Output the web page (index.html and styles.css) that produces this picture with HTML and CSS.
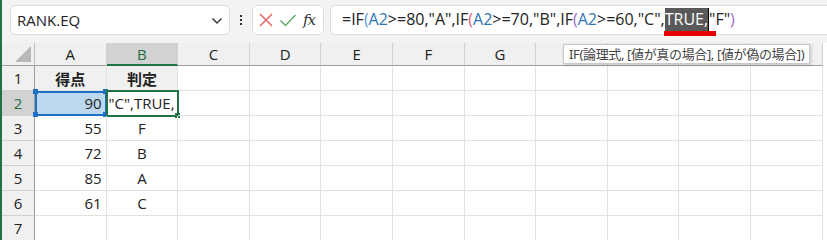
FILE: index.html
```html
<!DOCTYPE html>
<html lang="ja">
<head>
    <meta charset="UTF-8">
    <title>RANK.EQ</title>
    <link rel="stylesheet" href="styles.css">
</head>
<body>
    <div class="app">
        <div class="topbar">
            <div class="namebox">
                <span>RANK.EQ</span>
                <svg class="chevron" width="12" height="8" viewBox="0 0 12 8"><path d="M1.5 1.5 L6 6 L10.5 1.5" fill="none" stroke="#333" stroke-width="1.4"/></svg>
            </div>
            <div class="dots"><i></i><i></i><i></i></div>
            <div class="fbtns">
                <svg width="16" height="16" viewBox="0 0 16 16"><path d="M2 2 L14 14 M14 2 L2 14" stroke="#e06666" stroke-width="1.5" fill="none"/></svg>
                <svg width="18" height="16" viewBox="0 0 18 16"><path d="M1.5 8.5 L6.5 13.5 L16.5 3" stroke="#5cac6a" stroke-width="1.5" fill="none"/></svg>
                <span class="fx">fx</span>
            </div>
            <div class="formula">=IF<span class="p1">(</span><span class="ref">A2</span>&gt;=80,"A",IF<span class="p2">(</span><span class="ref">A2</span>&gt;=70,"B",IF<span class="p3">(</span><span class="ref">A2</span>&gt;=60,"C",<span class="sel">TRUE,</span>"F"<span class="p3">)</span></div>
        </div>

        <div class="sheet">
            <div class="corner"></div>
            <div class="colhead">A</div>
            <div class="colhead active">B</div>
            <div class="colhead">C</div>
            <div class="colhead">D</div>
            <div class="colhead">E</div>
            <div class="colhead">F</div>
            <div class="colhead">G</div>
            <!-- H..K sit under the tooltip -->
            <div class="colhead"></div>
            <div class="colhead"></div>
            <div class="colhead"></div>
            <div class="colhead"></div>

            <div class="rowhead">1</div>
            <div class="cell title">得点</div>
            <div class="cell title">判定</div>
            <div class="cell"></div><div class="cell"></div><div class="cell"></div><div class="cell"></div><div class="cell"></div><div class="cell"></div><div class="cell"></div><div class="cell"></div><div class="cell"></div>

            <div class="rowhead active">2</div>
            <div class="cell num picked">90<b class="h tl"></b><b class="h tr"></b><b class="h bl"></b><b class="h br"></b></div>
            <div class="cell editing">"C",TRUE,<b class="h g"></b></div>
            <div class="cell"></div><div class="cell"></div><div class="cell"></div><div class="cell"></div><div class="cell"></div><div class="cell"></div><div class="cell"></div><div class="cell"></div><div class="cell"></div>

            <div class="rowhead">3</div>
            <div class="cell num">55</div>
            <div class="cell mid">F</div>
            <div class="cell"></div><div class="cell"></div><div class="cell"></div><div class="cell"></div><div class="cell"></div><div class="cell"></div><div class="cell"></div><div class="cell"></div><div class="cell"></div>

            <div class="rowhead">4</div>
            <div class="cell num">72</div>
            <div class="cell mid">B</div>
            <div class="cell"></div><div class="cell"></div><div class="cell"></div><div class="cell"></div><div class="cell"></div><div class="cell"></div><div class="cell"></div><div class="cell"></div><div class="cell"></div>

            <div class="rowhead">5</div>
            <div class="cell num">85</div>
            <div class="cell mid">A</div>
            <div class="cell"></div><div class="cell"></div><div class="cell"></div><div class="cell"></div><div class="cell"></div><div class="cell"></div><div class="cell"></div><div class="cell"></div><div class="cell"></div>

            <div class="rowhead">6</div>
            <div class="cell num">61</div>
            <div class="cell mid">C</div>
            <div class="cell"></div><div class="cell"></div><div class="cell"></div><div class="cell"></div><div class="cell"></div><div class="cell"></div><div class="cell"></div><div class="cell"></div><div class="cell"></div>

            <div class="rowhead">7</div>
            <div class="cell"></div><div class="cell"></div><div class="cell"></div><div class="cell"></div><div class="cell"></div><div class="cell"></div><div class="cell"></div><div class="cell"></div><div class="cell"></div><div class="cell"></div><div class="cell"></div>

            <div class="tooltip">IF(論理式, [値が真の場合], [値が偽の場合])</div>
        </div>
    </div>
</body>
</html>
```

FILE: styles.css
```css
body {
    margin: 0;
    background-color: #ffffff;
    font-family: "Open Sans", "Noto Sans", "Noto Sans CJK JP", sans-serif;
    color: #222;
    overflow: hidden;
}

.app {
    width: 827px;
    height: 240px;
    border-left: 2px solid #217346;
    box-sizing: border-box;
    overflow: hidden;
}

/* formula bar */
.topbar {
    height: 43px;
    background-color: #f3f3f3;
    display: flex;
    align-items: flex-start;
    padding: 5px 0 0 8px;
    box-sizing: border-box;
}

.namebox {
    width: 220px;
    height: 30px;
    box-sizing: border-box;
    background-color: white;
    border: 1px solid #dcdcdc;
    border-radius: 5px;
    display: flex;
    align-items: center;
    justify-content: space-between;
    padding: 0 6px 0 6px;
    font-size: 15px;
    color: #222;
}

.chevron {
    margin-top: 2px;
}

.dots {
    width: 22px;
    height: 30px;
    display: flex;
    flex-direction: column;
    align-items: center;
    justify-content: center;
    gap: 2px;
}

.dots i {
    width: 2px;
    height: 2px;
    background-color: #333;
}

.fbtns {
    width: 72px;
    height: 30px;
    box-sizing: border-box;
    background-color: white;
    border: 1px solid #dcdcdc;
    border-radius: 5px;
    display: flex;
    align-items: center;
    padding: 0 0 0 5px;
    gap: 5px;
}

.fx {
    font-family: "DejaVu Serif", "Liberation Serif", serif;
    font-style: italic;
    font-size: 15px;
    color: #333;
    letter-spacing: -1px;
    margin-left: 1px;
}

.formula {
    flex: 1;
    margin-left: 6px;
    height: 30px;
    box-sizing: border-box;
    background-color: white;
    border: 1px solid #dcdcdc;
    border-right: none;
    border-radius: 5px 0 0 5px;
    padding: 2px 0 0 11px;
    font-size: 16px;
    line-height: 23px;
    white-space: nowrap;
    color: #222;
}

.ref {
    color: #2e75b6;
}

.p1 {
    color: #5b9bd5;
}

.p2 {
    color: #e0607e;
}

.p3 {
    color: #9a6bc4;
}

.sel {
    position: relative;
    background-color: #595959;
    color: white;
    display: inline-block;
    border-right: 1px solid #000;
}

.sel::after {
    content: "";
    position: absolute;
    left: -1px;
    right: -8px;
    top: 23px;
    height: 5px;
    background-color: #e60000;
}

/* sheet */
.sheet {
    position: relative;
    display: grid;
    grid-template-columns: 33px repeat(11, 71.6px);
    grid-template-rows: 23px repeat(7, 25px);
    font-size: 15px;
}

.corner {
    background-color: #f0f0f0;
    border-right: 1px solid #bdbdbd;
    border-bottom: 1px solid #9e9e9e;
    position: relative;
}

.corner::after {
    content: "";
    position: absolute;
    right: 3px;
    bottom: 3px;
    border-left: 16px solid transparent;
    border-bottom: 16px solid #b8b8b8;
}

.colhead {
    background-color: #f0f0f0;
    border-right: 1px solid #d0d0d0;
    border-bottom: 1px solid #9e9e9e;
    display: flex;
    align-items: center;
    justify-content: center;
    color: #222;
}

.colhead.active {
    background-color: #d2d2d2;
    color: #1f6e43;
    border-bottom: 2px solid #217346;
}

.rowhead {
    background-color: #f0f0f0;
    border-right: 1px solid #9e9e9e;
    border-bottom: 1px solid #d0d0d0;
    display: flex;
    align-items: center;
    justify-content: center;
    color: #222;
}

.rowhead.active {
    background-color: #d2d2d2;
    color: #1f6e43;
}

.cell {
    border-right: 1px solid #e1e1e1;
    border-bottom: 1px solid #e1e1e1;
    display: flex;
    align-items: center;
    padding: 0 4px;
    white-space: nowrap;
    position: relative;
}

.cell.title {
    background-color: #f0f0f0;
    justify-content: center;
    font-weight: bold;
    font-family: "Noto Sans CJK JP", sans-serif;
}

.cell.num {
    justify-content: flex-end;
}

.cell.mid {
    justify-content: center;
}

.cell.picked {
    background-color: #bdd7ee;
    outline: 2px solid #1f6fc5;
    outline-offset: -2px;
}

.cell.editing {
    outline: 2px solid #217346;
    outline-offset: -1px;
    padding-left: 2px;
    overflow: visible;
}

.h {
    position: absolute;
    width: 5px;
    height: 5px;
    background-color: #1f6fc5;
}

.h.tl { left: -2px; top: -2px; }
.h.tr { right: -2px; top: -2px; }
.h.bl { left: -2px; bottom: -2px; }
.h.br { right: -2px; bottom: -2px; }

.h.g {
    background-color: #217346;
    right: -3px;
    bottom: -3px;
}

.tooltip {
    position: absolute;
    left: 561px;
    top: 1px;
    height: 20px;
    box-sizing: border-box;
    padding: 0 5px;
    background-color: white;
    border: 1px solid #c8c8c8;
    box-shadow: 1px 1px 3px rgba(0, 0, 0, 0.2);
    font-size: 13px;
    line-height: 18px;
    letter-spacing: -0.35px;
    color: #444;
    font-family: "Noto Sans", "Noto Sans CJK JP", sans-serif;
    white-space: nowrap;
}
```
